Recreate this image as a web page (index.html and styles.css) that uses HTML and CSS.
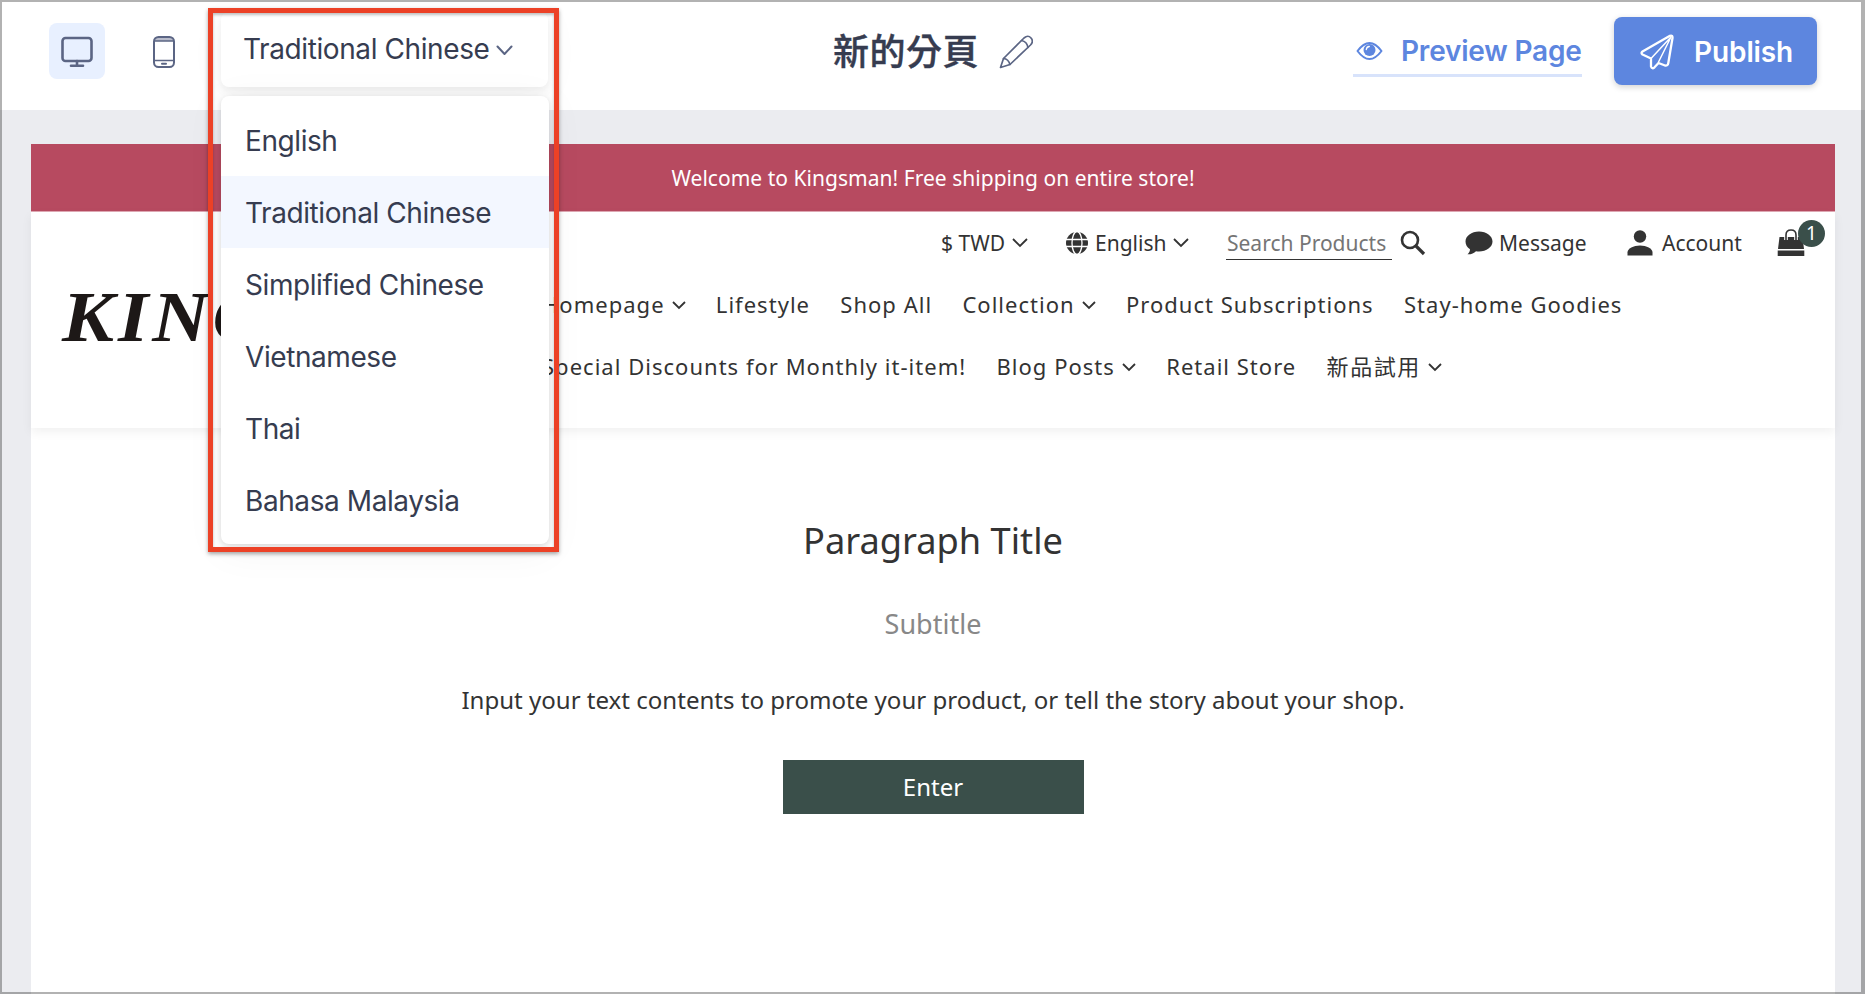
FILE: index.html
```html
<!DOCTYPE html>
<html lang="en">
<head>
    <meta charset="UTF-8">
    <meta name="viewport" content="width=device-width, initial-scale=1.0">
    <title>新的分頁</title>
    <link rel="stylesheet" href="styles.css">
</head>
<body>
    <div class="editor">
        <header class="toolbar">
            <button class="device-btn active" aria-label="Desktop">
                <svg width="32" height="32" viewBox="0 0 32 32" fill="none" stroke="#5b6584" stroke-width="2.6" stroke-linecap="round" stroke-linejoin="round">
                    <rect x="1.5" y="3" width="29" height="23" rx="3"/>
                    <path d="M16 26v5M10 30.700h12"/>
                </svg>
            </button>
            <button class="device-btn mobile" aria-label="Mobile">
                <svg width="22" height="32" viewBox="0 0 22 32" fill="none" stroke="#5b6584" stroke-width="2">
                    <path d="M2 5q0-4 4-4h10q4 0 4 4z" fill="#b9bccb" stroke="none"/>
                    <rect x="1" y="1" width="20" height="30" rx="4.5"/>
                    <path d="M1 5h20M1 24.5h20" stroke-width="1.6"/>
                    <path d="M9 27.7h4" stroke-linecap="round"/>
                </svg>
            </button>

            <div class="language">
                <button class="language-toggle">
                    <span>Traditional Chinese</span>
                    <svg class="toggle-arrow" width="17" height="11" viewBox="0 0 17 11" fill="none" stroke="#5b6584" stroke-width="2" stroke-linecap="round" stroke-linejoin="round"><path d="M1.5 1.5l7 7.5 7-7.5"/></svg>
                </button>
                <ul class="language-menu">
                    <li>English</li>
                    <li class="selected">Traditional Chinese</li>
                    <li>Simplified Chinese</li>
                    <li>Vietnamese</li>
                    <li>Thai</li>
                    <li>Bahasa Malaysia</li>
                </ul>
                <div class="highlight"></div>
            </div>

            <div class="page-name">
                <h1>新的分頁</h1>
                <svg width="34" height="34" viewBox="0 0 34 34" fill="none" stroke="#5b6584" stroke-width="1.7" stroke-linecap="round" stroke-linejoin="round">
                    <path d="M1.5 32.5l3-9L25 3q4-3.500 7 0 3 3.500-.5 7L11 29.500z"/>
                    <path d="M22.500 5.500q5.500 1 6.500 7M4.500 23.500q5 .5 6.500 6"/>
                </svg>
            </div>

            <a class="preview-link">
                <svg width="27" height="20" viewBox="0 0 27 20" fill="none" stroke="#5d86df" stroke-width="2">
                    <path d="M1.500 10Q13.500-6 25.500 10 13.500 26 1.500 10z" stroke-linejoin="round"/>
                    <circle cx="13.500" cy="9" r="6" fill="#5d86df" stroke="none"/>
                    <path d="M10.300 8.500q.3-2.700 3-3" stroke="#fff" stroke-width="1.300" stroke-linecap="round"/>
                </svg>
                <span>Preview Page</span>
            </a>
            <button class="publish-btn">
                <svg width="34" height="36" viewBox="0 0 34 36" fill="none" stroke="#fff" stroke-width="2.300" stroke-linecap="round" stroke-linejoin="round">
                    <path d="M30 1.800L2.500 17.500q-2 1.500 0 3l8.500 4v8q1 3 3.500.8l4-4.300 6.500 2.500q2.800.5 3.300-2.500L32.500 4q.2-3.200-2.500-2.200z"/>
                    <path d="M31 3L11 24.500M31 3L18.500 28" stroke-width="1.500"/>
                </svg>
                <span>Publish</span>
            </button>
        </header>

        <main class="canvas">
            <div class="announcement">Welcome to Kingsman! Free shipping on entire store!</div>

            <div class="shop-header">
                <div class="tools">
                    <div class="tool currency">$ TWD
                        <svg class="chevron-lg" viewBox="0 0 16 10"><path d="M1 1l7 7 7-7"/></svg>
                    </div>
                    <div class="tool locale">
                        <svg class="globe" width="22" height="22" viewBox="0 0 22 22">
                            <circle cx="11" cy="11" r="11" fill="#333"/>
                            <g fill="none" stroke="#fff" stroke-width="1.300">
                                <ellipse cx="11" cy="11" rx="5" ry="11.500"/>
                                <path d="M0 7.500h22M0 14.500h22"/>
                            </g>
                        </svg>
                        English
                        <svg class="chevron-lg" viewBox="0 0 16 10"><path d="M1 1l7 7 7-7"/></svg>
                    </div>
                    <div class="tool search">
                        <span class="search-field">Search Products</span>
                        <svg width="26" height="26" viewBox="0 0 26 26" fill="none" stroke="#333">
                            <circle cx="10" cy="10" r="8" stroke-width="2.600"/>
                            <path d="M16 16l8 8" stroke-width="3.200"/>
                        </svg>
                    </div>
                    <div class="tool message">
                        <svg width="28" height="24" viewBox="0 0 28 24" fill="#333">
                            <path d="M14 0.500C21.500 0.500 27.500 5 27.500 10.500S21.500 20.500 14 20.500c-1 0-2 0-3-.3-2 2-5 3.300-8.500 3.100 1.500-1.300 2.500-3 2.500-5C2.200 16.500.5 13.700.5 10.500.5 5 6.500.5 14 .5z"/>
                        </svg>
                        Message
                    </div>
                    <div class="tool account">
                        <svg width="26" height="26" viewBox="0 0 26 26" fill="#333">
                            <circle cx="13" cy="6.500" r="6.200"/>
                            <path d="M.5 25.500v-3c0-4 6-7 12.500-7s12.500 3 12.500 7v3z"/>
                        </svg>
                        Account
                    </div>
                    <div class="tool cart">
                        <svg width="28" height="28" viewBox="0 0 28 28">
                            <path d="M2.500 8h23L27 20H1z" fill="#333"/>
                            <path d="M.7 21.500h26.600V27H.7z" fill="#333"/>
                            <path d="M9 11V6q0-5 5-5t5 5v5" fill="none" stroke="#fff" stroke-width="3.600"/>
                            <path d="M9 11V6q0-5 5-5t5 5v5" fill="none" stroke="#333" stroke-width="1.600"/>
                        </svg>
                        <span class="badge">1</span>
                    </div>
                </div>

                <div class="brand-row">
                    <div class="logo">KING</div>
                    <nav class="menu">
                        <div class="menu-row">
                            <a>Homepage <svg class="chevron" viewBox="0 0 14 9"><path d="M1 1l6 6 6-6"/></svg></a>
                            <a>Lifestyle</a>
                            <a>Shop All</a>
                            <a>Collection <svg class="chevron" viewBox="0 0 14 9"><path d="M1 1l6 6 6-6"/></svg></a>
                            <a>Product Subscriptions</a>
                            <a>Stay-home Goodies</a>
                        </div>
                        <div class="menu-row">
                            <a>Special Discounts for Monthly it-item!</a>
                            <a>Blog Posts <svg class="chevron" viewBox="0 0 14 9"><path d="M1 1l6 6 6-6"/></svg></a>
                            <a>Retail Store</a>
                            <a class="zh">新品試用 <svg class="chevron" viewBox="0 0 14 9"><path d="M1 1l6 6 6-6"/></svg></a>
                        </div>
                    </nav>
                </div>
            </div>

            <section class="content">
                <h2>Paragraph Title</h2>
                <h3>Subtitle</h3>
                <p>Input your text contents to promote your product, or tell the story about your shop.</p>
                <a class="enter-btn">Enter</a>
            </section>
        </main>
    </div>
</body>
</html>
```

FILE: styles.css
```css
* {
    box-sizing: border-box;
    margin: 0;
    padding: 0;
}

body {
    font-family: "Noto Sans", "Noto Sans CJK TC", sans-serif;
    color: #333;
    background-color: #fff;
}

button {
    border: none;
    background: none;
    font: inherit;
    cursor: pointer;
}

svg {
    display: block;
    flex-shrink: 0;
}

.editor {
    position: relative;
    height: 994px;
    overflow: hidden;
    background-color: #ebecf0;
}

/* window edge */
.editor::after {
    content: "";
    position: absolute;
    inset: 0;
    border: 2px solid rgba(0, 0, 0, 0.3);
    border-right-width: 4px;
    pointer-events: none;
    z-index: 20;
}

/* toolbar */
.toolbar {
    position: relative;
    z-index: 10;
    display: flex;
    align-items: flex-start;
    height: 110px;
    padding: 0 48px 0 49px;
    background-color: #fff;
    font-family: Inter, sans-serif;
    color: #363c50;
}

.device-btn {
    display: flex;
    align-items: center;
    justify-content: center;
    width: 56px;
    height: 56px;
    margin: 23px 30px 0 0;
    border-radius: 8px;
}

.device-btn.active {
    background-color: #e8f0ff;
}

.device-btn.mobile {
    padding: 2px 0 0 2px;
}

.language {
    position: relative;
    width: 328px;
    margin-top: 12px;
}

.language-toggle {
    display: flex;
    align-items: center;
    gap: 6px;
    width: 327px;
    height: 75px;
    padding: 0 0 1px 22px;
    border-radius: 8px;
    background-color: #fff;
    box-shadow: 0 4px 8px rgba(0, 0, 0, 0.06), 0 4px 36px rgba(0, 0, 0, 0.04);
    color: #363c50;
    font-size: 28px;
    letter-spacing: -0.4px;
    white-space: nowrap;
}

.toggle-arrow {
    margin-top: 3px;
}

.language-menu {
    position: absolute;
    top: 84px;
    left: 0;
    width: 328px;
    height: 448px;
    padding: 8px 0;
    border-radius: 8px;
    background-color: #fff;
    box-shadow: 0 2px 6px rgba(0, 0, 0, 0.14), 0 6px 40px rgba(0, 0, 0, 0.05);
    list-style: none;
    overflow: hidden;
    font-size: 28px;
    letter-spacing: -0.42px;
}

.language-menu li {
    height: 72px;
    padding-left: 24px;
    line-height: 74px;
}

.language-menu .selected {
    background-color: #f3f7ff;
}

.highlight {
    position: absolute;
    top: -4px;
    left: -13px;
    width: 351px;
    height: 544px;
    border: 5px solid #ec4126;
    box-shadow: 0 2px 4px rgba(0, 0, 0, 0.35), inset 0 2px 3px rgba(0, 0, 0, 0.25);
    pointer-events: none;
}

.page-name {
    display: flex;
    align-items: center;
    gap: 20px;
    height: 34px;
    margin: 35px 0 0 284px;
}

.page-name h1 {
    height: 40px;
    font-family: "Noto Sans CJK TC", sans-serif;
    font-size: 36px;
    font-weight: 500;
    line-height: 34px;
    letter-spacing: 0.5px;
    -webkit-text-stroke: 0.4px #363c50;
}

.preview-link {
    display: flex;
    align-items: center;
    gap: 18px;
    width: 229px;
    height: 52px;
    margin: 25px 0 0 auto;
    padding: 2px 0 0 3px;
    border-bottom: 3px solid #d8e3fb;
    color: #5d86df;
    font-size: 28px;
    font-weight: 600;
    letter-spacing: -0.2px;
    white-space: nowrap;
}

.publish-btn {
    display: flex;
    align-items: center;
    gap: 20px;
    width: 203px;
    height: 68px;
    margin: 17px 0 0 32px;
    padding: 1px 0 0 26px;
    border-radius: 8px;
    background-color: #5d86df;
    box-shadow: 0 2px 6px rgba(0, 0, 0, 0.18);
    color: #fff;
    font-size: 28px;
    font-weight: 600;
    letter-spacing: -0.1px;
}

/* shop preview */
.canvas {
    width: 1804px;
    height: 850px;
    margin: 34px 0 0 31px;
    background-color: #fff;
}

.announcement {
    height: 68px;
    border-bottom: 1px solid #dfa9b4;
    background-color: #b74a60;
    color: #fff;
    font-size: 21px;
    line-height: 69px;
    letter-spacing: 0.03px;
    text-align: center;
}

.shop-header {
    height: 216px;
    box-shadow: 0 4px 10px rgba(0, 0, 0, 0.06);
}

.tools {
    display: flex;
    height: 61px;
    padding-left: 910px;
    font-size: 21px;
}

.tool {
    display: flex;
    align-items: center;
    white-space: nowrap;
}

.chevron,
.chevron-lg {
    fill: none;
    stroke: #333;
    stroke-width: 1.8;
}

.chevron-lg {
    width: 16px;
    height: 10px;
    margin-left: 7px;
}

.chevron {
    width: 14px;
    height: 9px;
    margin: 2px 0 0 7px;
}

.currency {
    width: 125px;
}

.locale {
    width: 160px;
}

.globe {
    margin-right: 7px;
}

.search {
    width: 239px;
}

.search-field {
    width: 166px;
    height: 34px;
    margin: 0 8px 0 0;
    padding-left: 1px;
    border-bottom: 1.5px solid #333;
    line-height: 34px;
    color: #757575;
}

.message {
    gap: 6px;
    width: 162px;
}

.account {
    gap: 9px;
    width: 150px;
}

.cart {
    position: relative;
}

.badge {
    position: absolute;
    top: 8px;
    left: 21px;
    width: 27px;
    height: 27px;
    border-radius: 50%;
    background-color: #3a4f4a;
    color: #fff;
    font-size: 19px;
    line-height: 27px;
    text-align: center;
}

.brand-row {
    display: flex;
}

.logo {
    width: 480px;
    height: 84px;
    margin: 2px 0 0 31px;
    font-family: "Liberation Serif", serif;
    font-size: 71px;
    font-weight: bold;
    font-style: italic;
    line-height: 84px;
    letter-spacing: 3.5px;
    color: #1d1817;
    transform: scaleX(1.1);
    transform-origin: left;
}

.menu-row {
    display: flex;
    align-items: center;
    gap: 30.3px;
    height: 62px;
    font-size: 22px;
    line-height: 30px;
    letter-spacing: 1.02px;
}

.menu-row a {
    display: flex;
    align-items: center;
    white-space: nowrap;
}

.menu-row .zh {
    letter-spacing: 1.6px;
}

.content {
    display: flex;
    flex-direction: column;
    align-items: center;
    padding-top: 87px;
}

.content h2 {
    font-size: 36.2px;
    font-weight: 400;
    line-height: 50px;
}

.content h3 {
    margin-top: 39px;
    color: #888;
    font-size: 27px;
    font-weight: 400;
    line-height: 40px;
}

.content p {
    margin-top: 38px;
    font-size: 24.05px;
    line-height: 36px;
}

.enter-btn {
    width: 301px;
    height: 54px;
    margin-top: 42px;
    background-color: #3a4f4a;
    color: #fff;
    font-size: 24px;
    line-height: 54px;
    text-align: center;
}
```
